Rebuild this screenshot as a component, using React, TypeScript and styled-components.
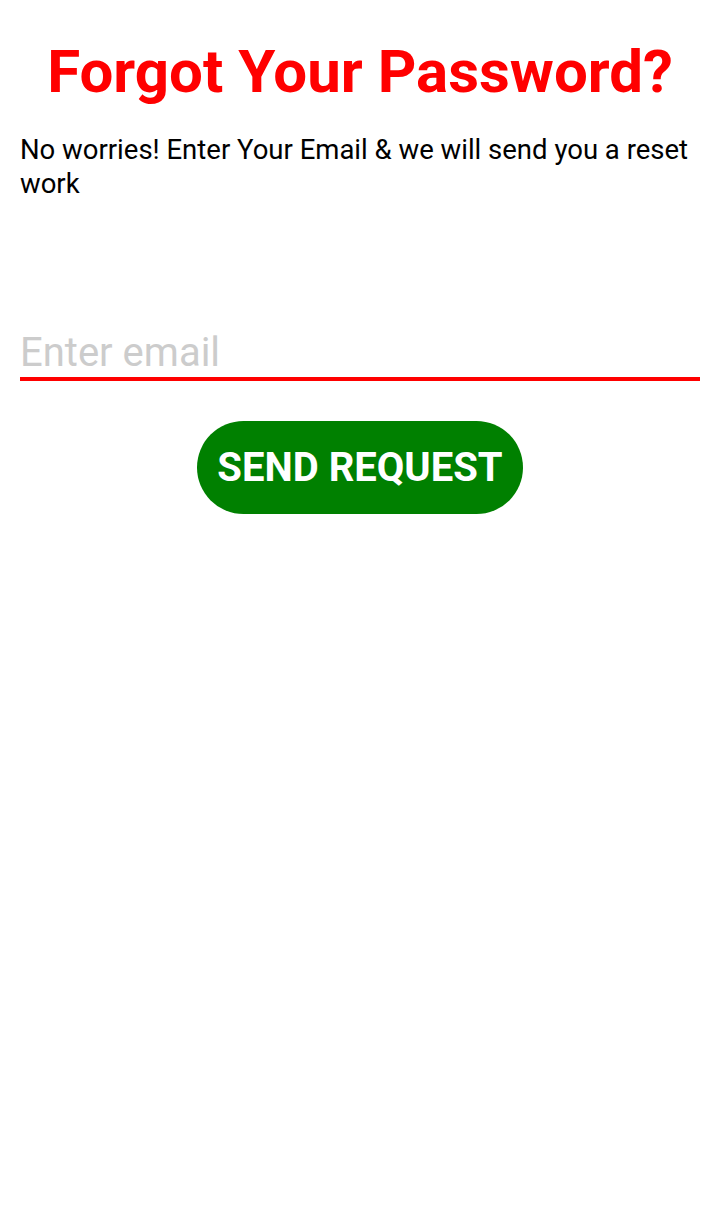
import styled, { createGlobalStyle } from "styled-components";

const GlobalStyle = createGlobalStyle`
  html, body {
    margin: 0;
    padding: 0;
    background: #fff;
  }
  body {
    font-family: Roboto, "Liberation Sans", sans-serif;
  }
`;

const Screen = styled.div`
  display: flex;
  flex-direction: column;
  padding: 37px 20px 0 20px;
  min-height: 100vh;
  box-sizing: border-box;
`;

const Title = styled.h1`
  margin: 0;
  text-align: center;
  color: #ff0000;
  font-size: 60px;
  font-weight: 700;
  line-height: 70px;
`;

const Subtitle = styled.p`
  margin: 26px 0 0 0;
  color: #000;
  font-size: 27.5px;
  line-height: 34px;
`;

const EmailInput = styled.input`
  margin-top: 128px;
  width: 100%;
  box-sizing: border-box;
  border: none;
  border-bottom: 4px solid #ff0000;
  outline: none;
  padding: 0 0 2px 0;
  font-family: Roboto, "Liberation Sans", sans-serif;
  font-size: 40px;
  line-height: 46px;
  height: 52px;
  color: #000;
  background: transparent;

  &::placeholder {
    color: #cccccc;
  }
`;

const SendButton = styled.button`
  align-self: center;
  margin-top: 40px;
  height: 93px;
  padding: 0 20px;
  border: none;
  border-radius: 47px;
  background: #008000;
  color: #fff;
  font-family: Roboto, "Liberation Sans", sans-serif;
  font-size: 40px;
  font-weight: 700;
  cursor: pointer;
`;

export default function App() {
  return (
    <>
      <GlobalStyle />
      <Screen>
        <Title>Forgot Your Password?</Title>
        <Subtitle>No worries! Enter Your Email &amp; we will send you a reset work</Subtitle>
        <EmailInput type="email" placeholder="Enter email" />
        <SendButton>SEND REQUEST</SendButton>
      </Screen>
    </>
  );
}
